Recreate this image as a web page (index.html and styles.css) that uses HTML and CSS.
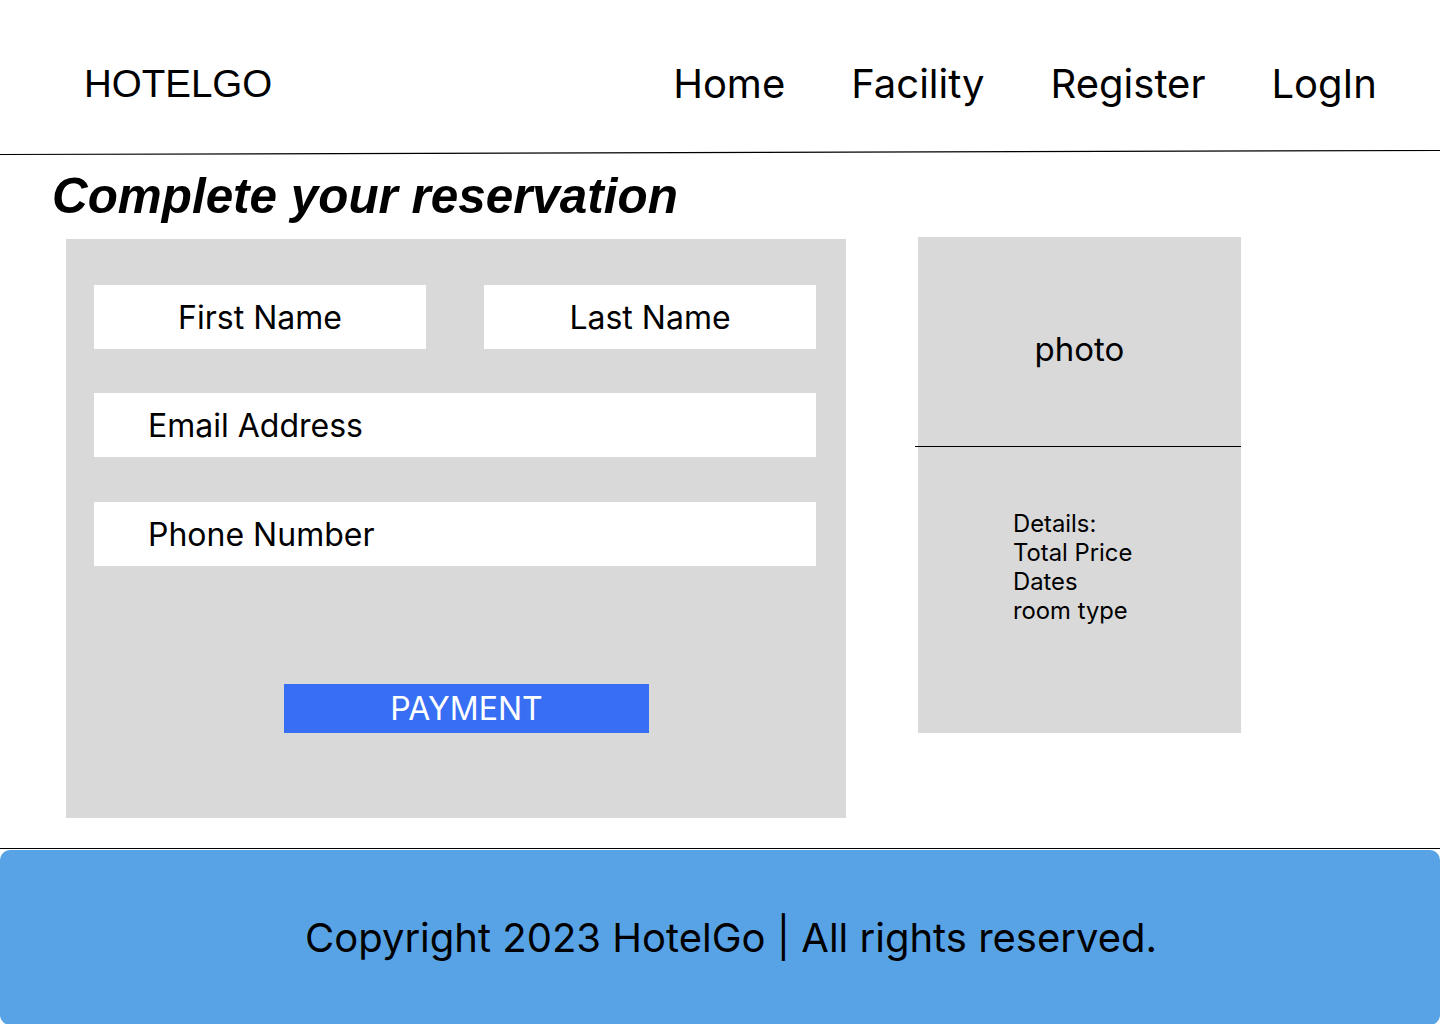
FILE: index.html
```html
<!DOCTYPE html>
<html lang="en">
<head>
<meta charset="utf-8">
<title>HotelGo - Complete your reservation</title>
<link rel="stylesheet" href="styles.css">
</head>
<body>
<header class="topbar">
  <div class="brand">HOTELGO</div>
  <nav class="nav">
    <a href="#">Home</a>
    <a href="#">Facility</a>
    <a href="#">Register</a>
    <a href="#">LogIn</a>
  </nav>
</header>
<svg class="divider" width="1440" height="6" viewBox="0 0 1440 6" preserveAspectRatio="none"><line x1="0" y1="4.5" x2="1440" y2="0.5" stroke="#000" stroke-width="1.2"/></svg>
<h1 class="title">Complete your reservation</h1>
<main class="content">
  <form class="form-panel">
    <div class="row two">
      <div class="field center">First Name</div>
      <div class="field center">Last Name</div>
    </div>
    <div class="field wide">Email Address</div>
    <div class="field wide">Phone Number</div>
    <button type="button" class="pay">PAYMENT</button>
  </form>
  <aside class="summary">
    <div class="photo">photo</div>
    <div class="details">
      <p>Details:</p>
      <p>Total Price</p>
      <p>Dates</p>
      <p>room type</p>
    </div>
  </aside>
</main>
<footer class="footer">
  <p>Copyright 2023 HotelGo | All rights reserved.</p>
</footer>
</body>
</html>
```
FILE: styles.css
```css
* { box-sizing: border-box; }
html, body { margin: 0; padding: 0; }
body {
  width: 1440px;
  height: 1024px;
  overflow: hidden;
  background: #fff;
  color: #000;
  font-family: Inter, "Noto Sans", sans-serif;
}
.topbar {
  height: 150px;
  display: flex;
  align-items: center;
  justify-content: space-between;
  padding: 16px 63px 0 84px;
}
.brand {
  font-family: "Liberation Sans", Arial, sans-serif;
  font-size: 38.5px;
  margin-top: 2px;
}
.nav {
  display: flex;
  gap: 66px;
}
.nav a {
  color: #000;
  text-decoration: none;
  font-size: 40px;
}
.divider { display: block; }
.title {
  margin: 12px 0 0 52px;
  font-family: "Liberation Sans", Arial, sans-serif;
  font-weight: bold;
  font-style: italic;
  font-size: 49.4px;
  line-height: 56px;
  height: 69px;
}
.content {
  display: flex;
  align-items: flex-start;
  padding-left: 66px;
  gap: 72px;
}
.form-panel {
  margin-top: 2px;
  width: 780px;
  height: 579px;
  background: #d9d9d9;
  padding: 46px 30px 0 28px;
  display: flex;
  flex-direction: column;
  gap: 44px;
}
.row.two {
  display: flex;
  justify-content: space-between;
}
.field {
  height: 64px;
  background: #fff;
  font-size: 32px;
  display: flex;
  align-items: center;
}
.row.two .field { width: 332px; }
.field.center { justify-content: center; }
.field.wide { padding-left: 54px; }
.field.wide + .field.wide { margin-top: 1px; }
.pay {
  margin: 74px 0 0 190px;
  width: 365px;
  height: 49px;
  border: 0;
  background: #386ef3;
  color: #fff;
  font-family: Inter, "Noto Sans", sans-serif;
  font-size: 32px;
  padding: 0;
}
.summary {
  width: 323px;
  height: 496px;
  background: #d9d9d9;
  display: flex;
  flex-direction: column;
}
.photo {
  height: 210px;
  border-bottom: 1px solid #000;
  margin-left: -3px;
  display: flex;
  align-items: center;
  justify-content: center;
  padding: 15px 0 0 3px;
  font-size: 33px;
}
.details {
  padding: 62px 0 0 95px;
  font-size: 23.8px;
  line-height: 29px;
}
.details p { margin: 0; }
.footer {
  margin-top: 30px;
  border-top: 1px solid #000;
  padding-top: 1px;
}
.footer p {
  margin: 0;
  height: 175px;
  background: #58a3e6;
  border-radius: 10px;
  display: flex;
  align-items: center;
  justify-content: center;
  padding-left: 22px;
  font-size: 40px;
}
```
